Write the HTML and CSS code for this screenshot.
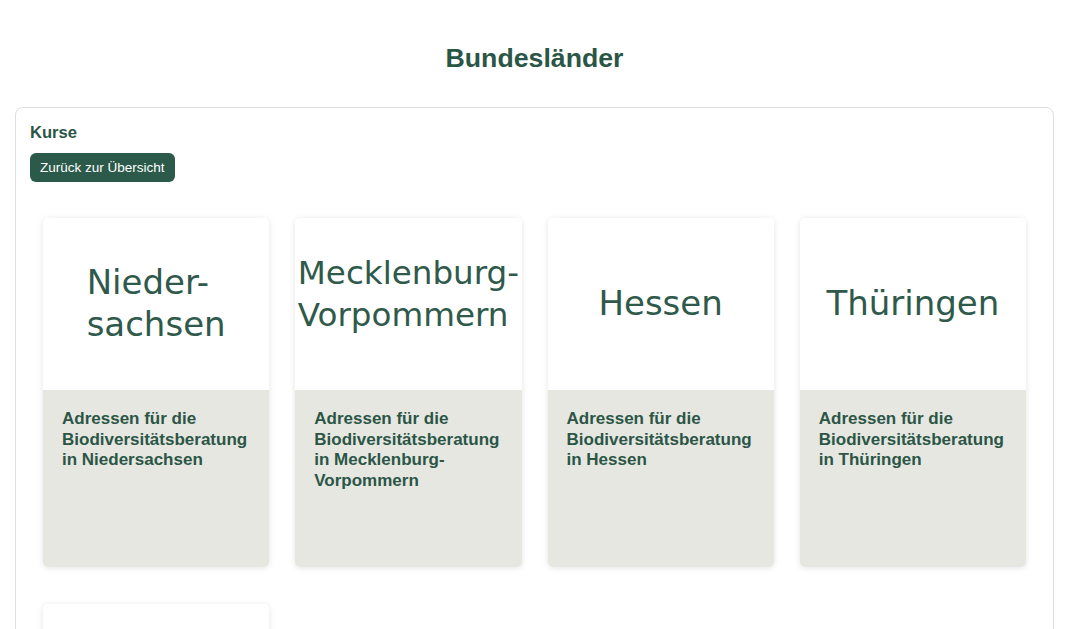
FILE: index.html
```html
<!DOCTYPE html>
<html lang="de">
<head>
<meta charset="utf-8">
<title>Bundesländer</title>
<link rel="stylesheet" href="styles.css">
</head>
<body>
<div class="page">
  <h1 class="page-title">Bundesländer</h1>
  <section class="panel">
    <h2 class="panel-title">Kurse</h2>
    <a class="btn" href="#">Zurück zur Übersicht</a>
    <div class="grid">
      <div class="col">
        <div class="card">
          <div class="card-img"><span class="state">Nieder-<br>sachsen</span></div>
          <div class="card-body">Adressen für die Biodiversitätsberatung in Niedersachsen</div>
        </div>
      </div>
      <div class="col">
        <div class="card">
          <div class="card-img card-img--high"><span class="state state--long">Mecklenburg-<br>Vorpommern</span></div>
          <div class="card-body">Adressen für die Biodiversitätsberatung in Mecklenburg-Vorpommern</div>
        </div>
      </div>
      <div class="col">
        <div class="card">
          <div class="card-img"><span class="state">Hessen</span></div>
          <div class="card-body">Adressen für die Biodiversitätsberatung in Hessen</div>
        </div>
      </div>
      <div class="col">
        <div class="card">
          <div class="card-img"><span class="state">Thüringen</span></div>
          <div class="card-body">Adressen für die Biodiversitätsberatung in Thüringen</div>
        </div>
      </div>
      <div class="col">
        <div class="card">
          <div class="card-img"><span class="state">Sachsen</span></div>
          <div class="card-body">Adressen für die Biodiversitätsberatung in Sachsen</div>
        </div>
      </div>
    </div>
  </section>
</div>
</body>
</html>
```

FILE: styles.css
```css
html, body {
  margin: 0;
  padding: 0;
  background: #ffffff;
  font-family: "Liberation Sans", Arial, sans-serif;
  color: #2b5646;
}

.page {
  padding: 0 13px 0 15px;
}

.page-title {
  margin: 0;
  padding: 41px 0 32px;
  text-align: center;
  font-size: 26.7px;
  line-height: 34px;
  font-weight: bold;
  color: #2b5646;
}

.panel {
  border: 1px solid #dedede;
  border-radius: 8px;
  padding: 14px 14px 0;
}

.panel-title {
  margin: 1px 0 11px;
  font-size: 16.6px;
  line-height: 19px;
  font-weight: bold;
  color: #2b5646;
}

.btn {
  display: inline-block;
  background: #2b5a4a;
  color: #ffffff;
  font-size: 13.5px;
  line-height: 15px;
  padding: 7px 10px;
  border-radius: 6px;
  text-decoration: none;
}

.grid {
  display: grid;
  grid-template-columns: repeat(4, 1fr);
  row-gap: 37px;
  margin-top: 36px;
}

.col {
  padding: 0 13px;
}

.card {
  border-radius: 5px;
  overflow: hidden;
  box-shadow: 0 1px 6px rgba(0, 0, 0, 0.11);
  background: #ffffff;
}

.card-img {
  height: 169px;
  padding-bottom: 3px;
  display: flex;
  align-items: center;
  justify-content: center;
  background: #ffffff;
}

.card-img--high {
  padding-bottom: 20px;
  height: 152px;
}

.state {
  display: inline-block;
  text-align: left;
  font-family: "DejaVu Sans", Verdana, sans-serif;
  font-size: 34px;
  line-height: 42px;
  color: #2f5a4b;
  white-space: nowrap;
}

.state--long {
  font-size: 32.6px;
}

.card-body {
  height: 139px;
  padding: 19px 19px;
  background: #e7e7e2;
  font-size: 17px;
  line-height: 20.5px;
  font-weight: bold;
  color: #2b5646;
}
```
